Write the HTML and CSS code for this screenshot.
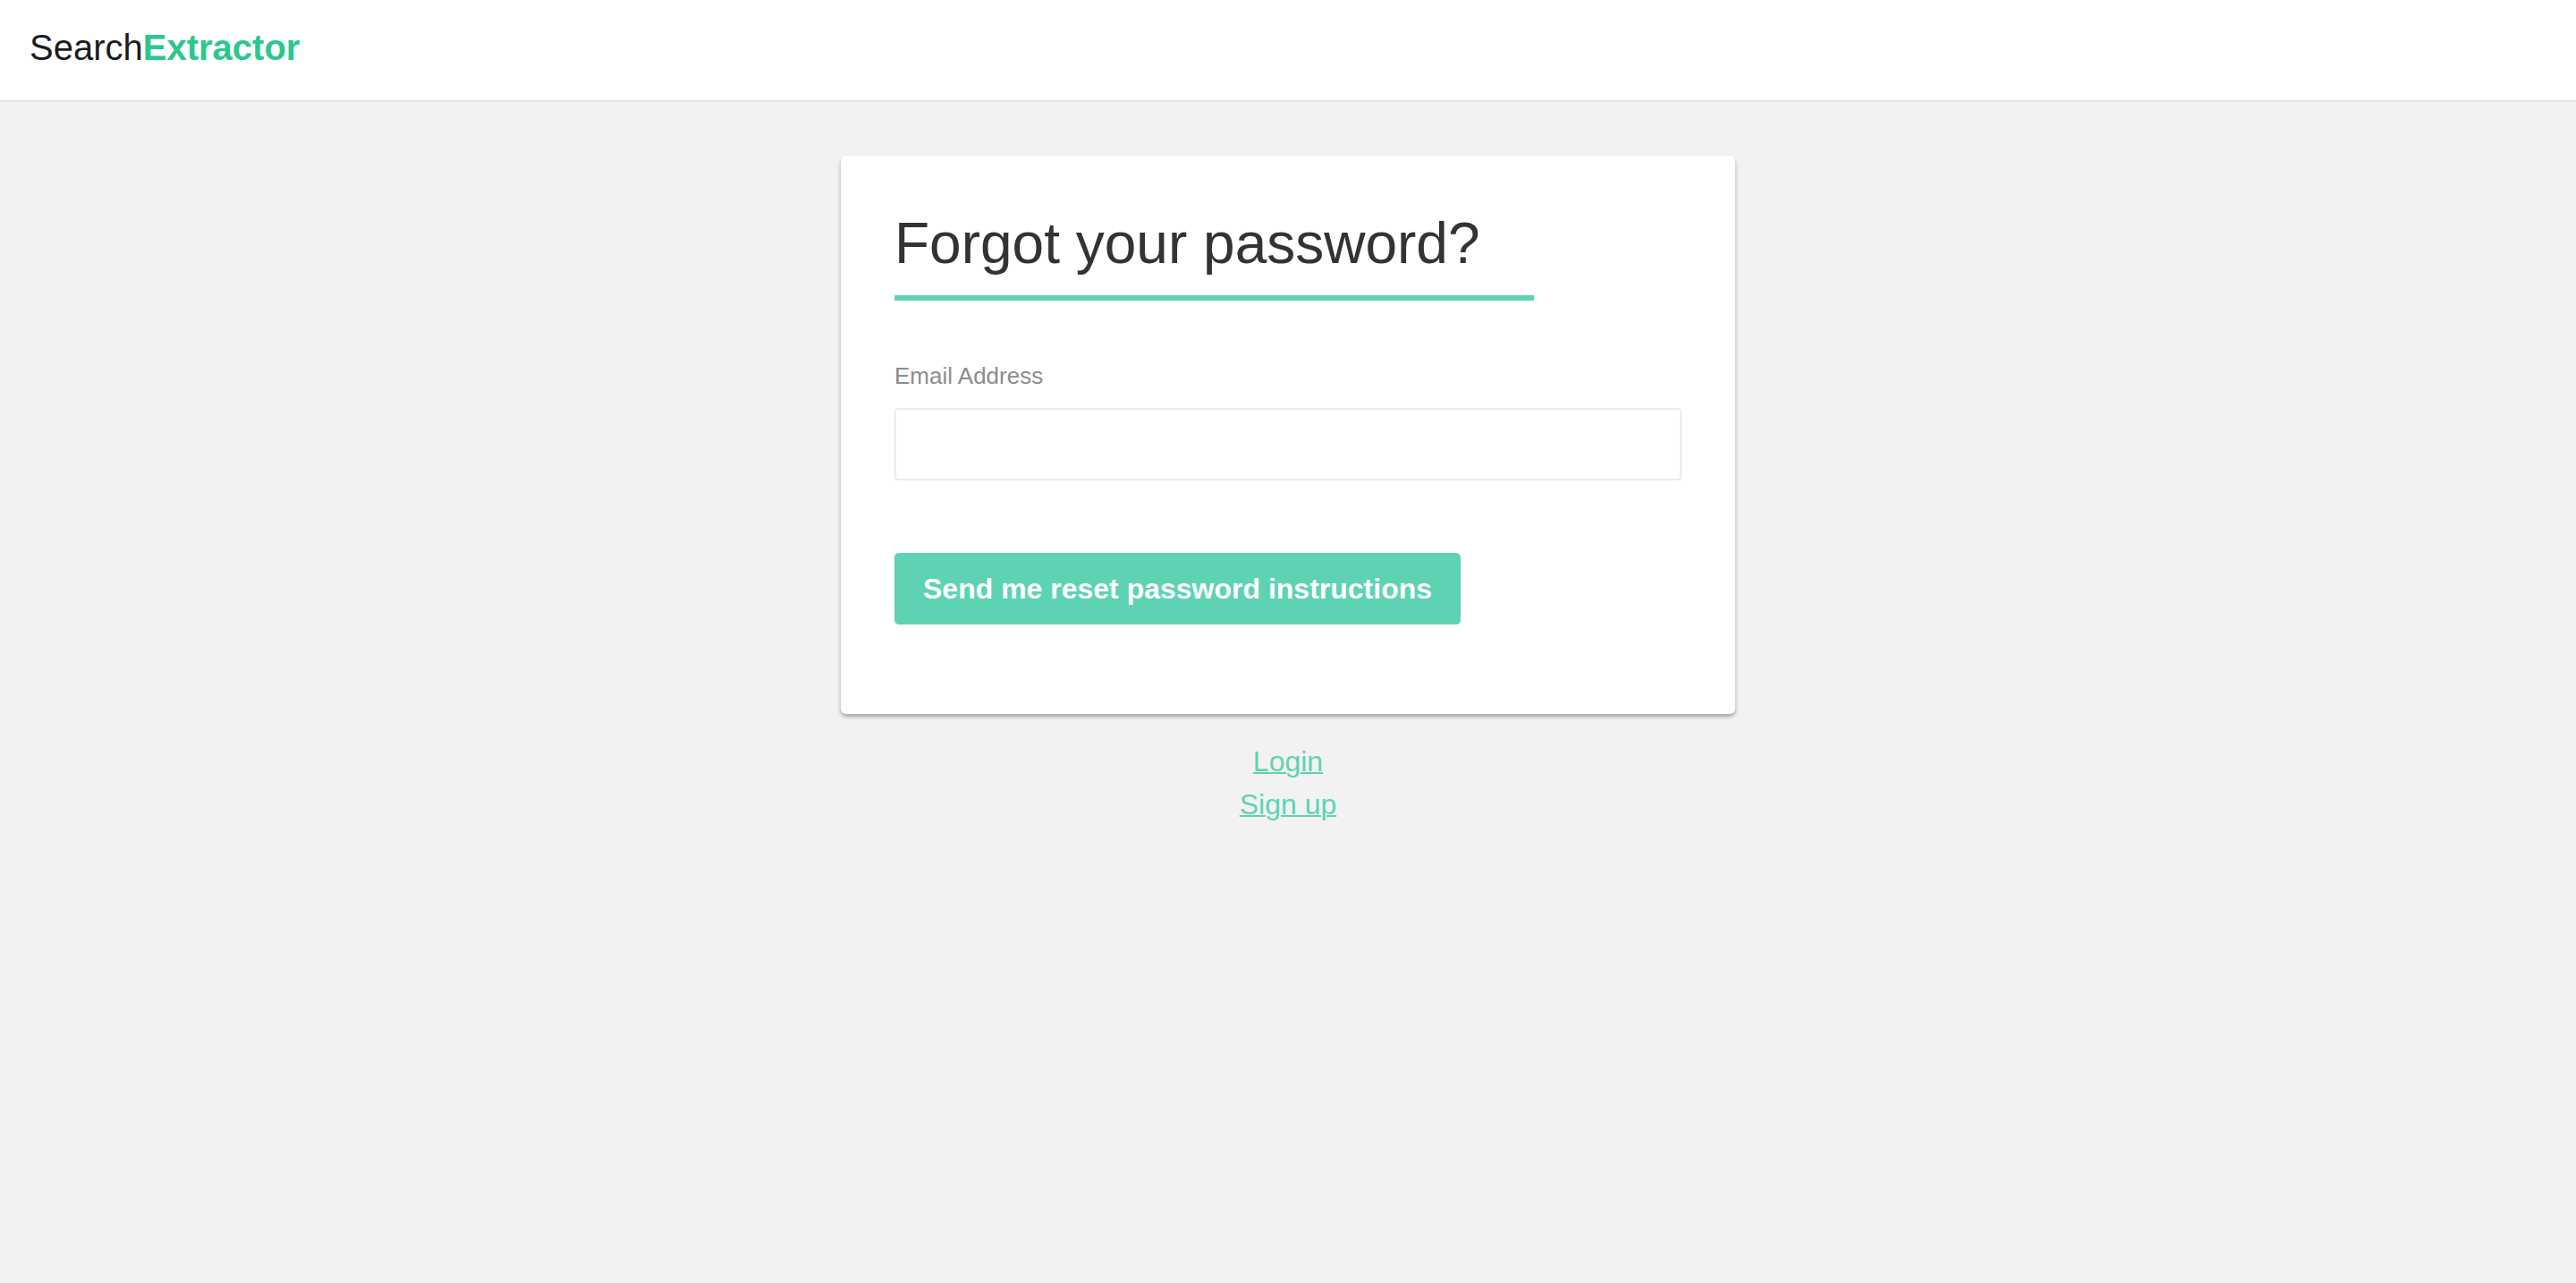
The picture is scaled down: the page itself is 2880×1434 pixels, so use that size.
FILE: index.html
```html
<!DOCTYPE html>
<html lang="en">
<head>
<meta charset="utf-8">
<title>Forgot your password? - SearchExtractor</title>
<link rel="stylesheet" href="styles.css">
</head>
<body>
<header class="topbar">
  <a class="logo" href="#"><span class="logo-plain">Search</span><span class="logo-accent">Extractor</span></a>
</header>
<main class="page">
  <section class="card">
    <h1 class="card-title">Forgot your password?</h1>
    <form class="form">
      <label class="field-label" for="email">Email Address</label>
      <input class="field-input" id="email" type="email">
      <button class="btn-primary" type="button">Send me reset password instructions</button>
    </form>
  </section>
  <nav class="links">
    <a class="link" href="#">Login</a>
    <a class="link" href="#">Sign up</a>
  </nav>
</main>
</body>
</html>
```
FILE: styles.css
```css
* { box-sizing: border-box; }
html, body {
  margin: 0;
  padding: 0;
}
body {
  min-height: 100vh;
  background: #f2f2f2;
  font-family: "Liberation Sans", Arial, Helvetica, sans-serif;
  color: #333333;
}
.topbar {
  background: #ffffff;
  height: 114px;
  padding: 33px 33px 0;
  border-bottom: 2px solid #e0e3e6;
}
.logo {
  display: inline-block;
  font-size: 40px;
  line-height: 40px;
  text-decoration: none;
}
.logo-plain { color: #1c1c1c; font-weight: 400; }
.logo-accent { color: #2cc78c; font-weight: 700; }

.page {
  display: flex;
  flex-direction: column;
  align-items: center;
}
.card {
  width: 1000px;
  margin-top: 60px;
  background: #ffffff;
  border-radius: 6px;
  box-shadow: 0 3px 4px rgba(0, 0, 0, 0.32);
  padding: 60px 60px 60px;
}
.card-title {
  display: inline-block;
  margin: 0;
  font-size: 64px;
  font-weight: 400;
  line-height: 1.2;
  color: #333333;
  padding: 0 60px 19px 0;
  border-bottom: 6px solid #5ed3b4;
}
.form {
  display: flex;
  flex-direction: column;
  align-items: flex-start;
}
.field-label {
  display: block;
  margin-top: 65px;
  font-size: 26px;
  line-height: 39px;
  color: #8c8c8c;
}
.field-input {
  width: 100%;
  height: 81px;
  margin-top: 16px;
  border: 2px solid #ebebeb;
  border-radius: 4px;
  background: #ffffff;
  font-family: inherit;
  font-size: 26px;
  padding: 0 16px;
}
.btn-primary {
  margin-top: 81px;
  margin-bottom: 40px;
  height: 80px;
  padding: 20px 32px;
  border: 0;
  border-radius: 5px;
  background: #5ed3b4;
  color: #ffffff;
  font-family: inherit;
  font-weight: 700;
  font-size: 32px;
  line-height: 40px;
}
.links {
  margin-top: 29px;
  display: flex;
  flex-direction: column;
  align-items: center;
}
.link {
  font-size: 32px;
  line-height: 48px;
  color: #5ed3b4;
  text-decoration: underline;
  text-decoration-thickness: 2px;
}
```
